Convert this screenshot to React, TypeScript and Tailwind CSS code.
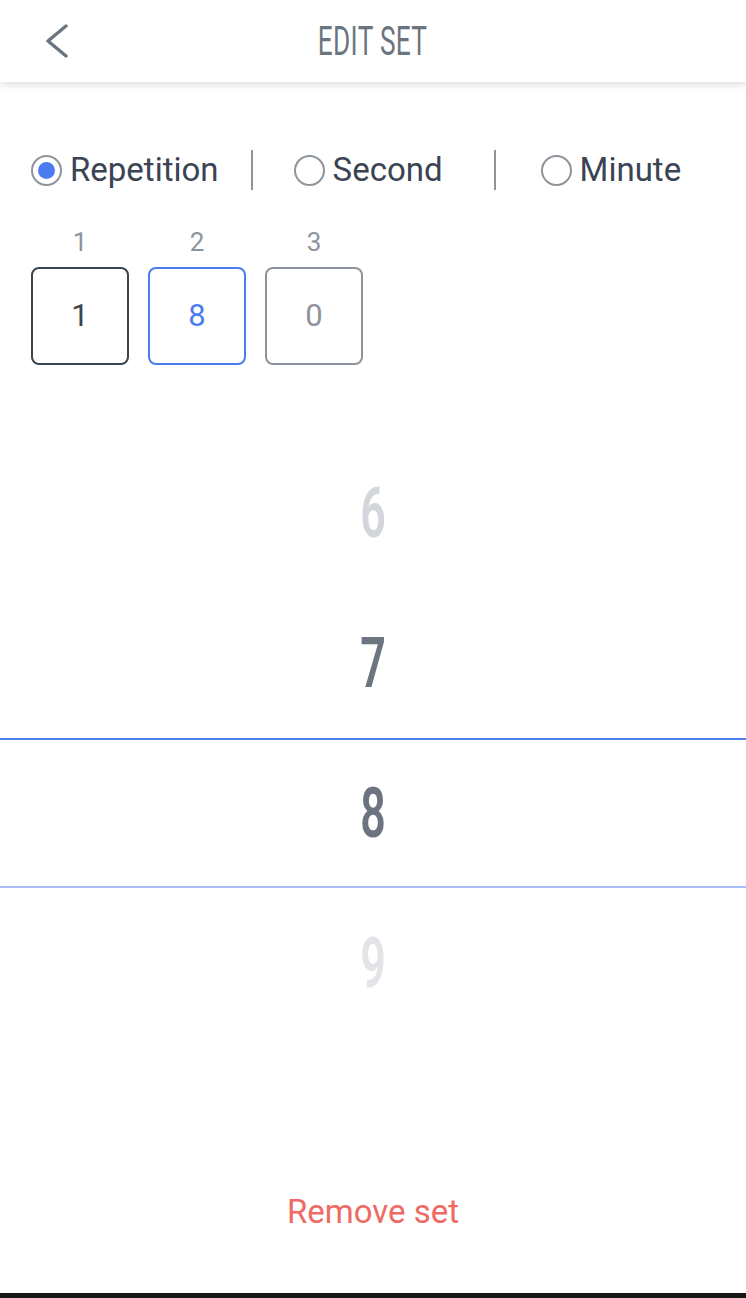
const condensed = { fontFamily: "Roboto, 'Liberation Sans', sans-serif" };

function Radio({ checked }: { checked?: boolean }) {
  return (
    <span className="w-[31px] h-[31px] rounded-full border-2 border-[#8e949b] flex items-center justify-center shrink-0">
      {checked && <span className="w-[17px] h-[17px] rounded-full bg-[#4a7cf0]" />}
    </span>
  );
}

const boxes = [
  { label: "1", value: "1", box: "border-[#3a4350] text-[#3a4350]" },
  { label: "2", value: "8", box: "border-[#4a7cf0] text-[#4a7cf0]" },
  { label: "3", value: "0", box: "border-[#8e949b] text-[#8e949b]" },
];

export default function App() {
  return (
    <div
      className="w-[746px] h-[1298px] bg-white flex flex-col overflow-hidden"
      style={{ fontFamily: "Roboto, 'Liberation Sans', sans-serif" }}
    >
      <header className="h-[82px] shrink-0 bg-white shadow-[0_3px_8px_rgba(0,0,0,0.13)] relative z-10 grid grid-cols-[1fr_auto_1fr] items-center">
        <div className="pl-[44px] flex items-center">
          <svg width="26" height="34" viewBox="0 0 26 34" fill="none">
            <polyline
              points="22,2 4,17 22,32"
              stroke="#6b7580"
              strokeWidth="3.4"
              strokeLinecap="round"
              strokeLinejoin="round"
            />
          </svg>
        </div>
        <h1
          className="text-[41px] leading-none text-[#6b7580] scale-x-[0.64] tracking-[0.5px]"
          style={condensed}
        >
          EDIT SET
        </h1>
        <div />
      </header>

      <div className="mt-[68px] h-[40px] flex items-center pl-[31px] text-[33px] text-[#3a4452]">
        <label className="flex items-center gap-[8px]">
          <Radio checked />
          <span>Repetition</span>
        </label>
        <span className="ml-[32px] w-[2px] h-[40px] bg-[#8e949b]" />
        <label className="ml-[41px] flex items-center gap-[8px]">
          <Radio />
          <span>Second</span>
        </label>
        <span className="ml-[51px] w-[2px] h-[40px] bg-[#8e949b]" />
        <label className="ml-[45px] flex items-center gap-[8px]">
          <Radio />
          <span>Minute</span>
        </label>
      </div>

      <div className="mt-[37px] flex gap-[19px] pl-[31px]">
        {boxes.map((b) => (
          <div key={b.label} className="w-[98px] flex flex-col items-center">
            <span className="text-[26px] leading-[30px] text-[#8e949b]">{b.label}</span>
            <div
              className={`mt-[10px] w-[98px] h-[98px] rounded-[8px] border-2 flex items-center justify-center text-[31px] ${b.box}`}
            >
              {b.value}
            </div>
          </div>
        ))}
      </div>

      <div className="mt-[73px] flex flex-col text-[70px] leading-none font-semibold">
        <div className="h-[150px] flex items-center justify-center text-[#d3d6da]">
          <span className="scale-x-[0.64]" style={condensed}>6</span>
        </div>
        <div className="h-[150px] flex items-center justify-center text-[#6c7580]">
          <span className="scale-x-[0.64]" style={condensed}>7</span>
        </div>
        <div className="h-[150px] flex items-center justify-center text-[#6b7480] border-t-2 border-b-2 border-t-[#4e7ef0] border-b-[#a8bef7]">
          <span className="scale-x-[0.64]" style={condensed}>8</span>
        </div>
        <div className="h-[150px] flex items-center justify-center text-[#e2e4e7]">
          <span className="scale-x-[0.64]" style={condensed}>9</span>
        </div>
      </div>

      <div className="mt-[154px] h-[40px] flex items-center justify-center text-[33px] text-[#ef6a65]">
        Remove set
      </div>

      <div className="flex-1" />
      <div className="h-[5px] bg-[#161616]" />
    </div>
  );
}
